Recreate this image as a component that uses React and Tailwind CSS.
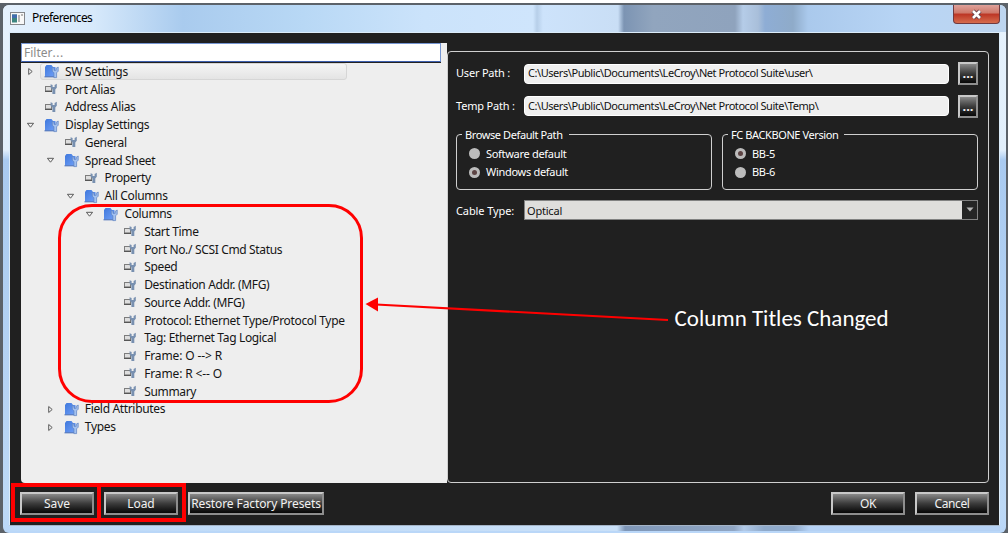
import clsx from "clsx";

// depth drives the indent of each row, open is only set on folders
const TREE = [
  { label: "SW Settings", depth: 0, folder: true, selected: true },
  { label: "Port Alias", depth: 0 },
  { label: "Address Alias", depth: 0 },
  { label: "Display Settings", depth: 0, folder: true, open: true },
  { label: "General", depth: 1 },
  { label: "Spread Sheet", depth: 1, folder: true, open: true },
  { label: "Property", depth: 2 },
  { label: "All Columns", depth: 2, folder: true, open: true },
  { label: "Columns", depth: 3, folder: true, open: true },
  { label: "Start Time", depth: 4 },
  { label: "Port No./ SCSI Cmd Status", depth: 4 },
  { label: "Speed", depth: 4 },
  { label: "Destination Addr. (MFG)", depth: 4 },
  { label: "Source Addr. (MFG)", depth: 4 },
  { label: "Protocol: Ethernet Type/Protocol Type", depth: 4 },
  { label: "Tag: Ethernet Tag Logical", depth: 4 },
  { label: "Frame: O --> R", depth: 4, wide: true },
  { label: "Frame: R <-- O", depth: 4, wide: true },
  { label: "Summary", depth: 4 },
  { label: "Field Attributes", depth: 1, folder: true },
  { label: "Types", depth: 1, folder: true },
];

const INDENT = 19.8;

const FolderIcon = () => (
  <svg width="16" height="15" viewBox="0 0 16 15" className="shrink-0">
    <defs>
      <linearGradient id="folder" x1="0" y1="0" x2="1" y2="1">
        <stop offset="0" stopColor="#3f78dc" />
        <stop offset="1" stopColor="#6f9ff7" />
      </linearGradient>
    </defs>
    <path d="M1 3 L2.5 1 H7.5 L9 3 H11.5 V12.5 H1 Z" fill="url(#folder)" />
    <path d="M0.5 12.8 H10" stroke="#3c65b4" strokeWidth="1" />
    <path
      d="M8.3 3.4 L10 4.2 V6.3 H12.2 V4.2 L14.2 3 V7.2 L12.6 8.8 V13.6 H9.9 V8.8 L8.3 7.2 Z"
      fill="#a3c1f0"
      stroke="#5a7fc0"
      strokeWidth="0.7"
    />
  </svg>
);

const ToolIcon = () => (
  <svg width="14" height="13" viewBox="0 0 14 13" className="shrink-0">
    <rect x="1.5" y="3.5" width="6" height="4.5" fill="#dedede" stroke="#7d7d7d" />
    <path d="M1 8.4 H8" stroke="#4c4c4c" strokeWidth="1" />
    <path
      d="M6.6 1.3 L8.6 2 V4 H10.6 V2 L12.8 0.8 V4.8 L11.3 6.4 V11 H8.4 V6.4 L6.6 4.6 Z"
      fill="#7890b0"
    />
  </svg>
);

const Arrow = ({ open }) => (
  <svg width="9" height="9" viewBox="0 0 9 9" className="shrink-0">
    <path
      d={open ? "M1.4 2.3 H7.6 L4.5 6.2 Z" : "M2.7 1.5 L6.2 4.5 L2.7 7.5 Z"}
      fill="#f2f2f2"
      stroke="#5c5c5c"
      strokeWidth="1"
    />
  </svg>
);

const TreeRow = ({ label, depth, folder, open, selected, wide }) => (
  <div className="flex h-[17.78px] items-center" style={{ paddingLeft: 5 + depth * INDENT }}>
    <div className="w-[14px] shrink-0">{folder && <Arrow open={open} />}</div>
    <div
      className={clsx(
        "flex h-[17px] items-center border",
        selected
          ? "w-[307px] rounded-[3px] border-[#d6d6d6] bg-linear-to-b from-[#f5f5f5] to-[#e4e4e4]"
          : "border-transparent"
      )}
    >
      <div className="flex w-[24px] shrink-0 items-center pl-[3px]">
        {folder ? <FolderIcon /> : <ToolIcon />}
      </div>
      <span
        className={clsx(
          "text-[12px] leading-[16px] whitespace-nowrap text-[#151515]",
          wide ? "tracking-[-0.13px]" : "tracking-[-0.34px]"
        )}
      >
        {label}
      </span>
    </div>
  </div>
);

const Button = ({ children, className }) => (
  <div
    className={clsx(
      "flex h-[23px] items-center justify-center whitespace-nowrap border-2 border-t-[#c8c8c8] border-r-[#8e8e8e] border-b-[#8e8e8e] border-l-[#c8c8c8] bg-linear-to-b from-[#8a8a8a] via-[#3c3c3c] to-[#080808] text-[#f2f2f2]",
      className
    )}
  >
    {children}
  </div>
);

const PathRow = ({ label, value }) => (
  <div className="flex h-[23px] items-center">
    <span className="w-[68px] shrink-0 tracking-[-0.2px]">{label}</span>
    <div className="flex h-[20px] w-[425px] items-center rounded-[4px] border border-white bg-[#efefef] pl-[3px] tracking-[-0.44px] whitespace-nowrap text-[#111]">
      {value}
    </div>
    <Button className="ml-[9px] w-[20px] pt-[1px] text-[13px] font-bold">...</Button>
  </div>
);

const Radio = ({ label, checked }) => (
  <div className="flex h-[18.5px] items-center gap-[6px]">
    <span className="flex size-[11px] items-center justify-center rounded-full bg-[#bcbcbc]">
      {checked && <span className="size-[5px] rounded-full bg-[#5d4444]" />}
    </span>
    <span className="tracking-[-0.3px] whitespace-nowrap">{label}</span>
  </div>
);

const Group = ({ title, options, selected }) => (
  <fieldset className="h-[63px] w-[256px] rounded-[4px] border border-[#cfcfcf] pl-[12px]">
    <legend className="-ml-[7px] h-[16px] pr-[6px] pl-[3px] leading-[15px] tracking-[-0.4px] whitespace-nowrap">
      {title}
    </legend>
    <div className="pt-[2px]">
      {options.map((o) => (
        <Radio key={o} label={o} checked={o === selected} />
      ))}
    </div>
  </fieldset>
);

const TitleBar = () => (
  <div className="flex h-[27px] items-start justify-between rounded-t-[6px] bg-[linear-gradient(90deg,#e5f1fd_0px,#d7e9fb_90px,#a9cbee_180px,#b8d8f5_300px,#cbe3fb_420px,#cfe5fc_530px,#b7cfe9_534px,#cde3fb_540px,#c9def5_615px,#7c94b3_621px,#91a5be_650px,#8fa3bd_732px,#b5cce8_740px,#a9bfda_755px,#8eadd5_762px,#8fabc9_790px,#aac9ec_805px,#b8d5f5_900px,#bdd5ef_1002px)]">
    <div className="flex items-center gap-[7px] pt-[4px] pl-[7px]">
      <svg width="15" height="13" viewBox="0 0 15 13">
        <rect x="0.5" y="0.5" width="14" height="12" fill="#f8f8f8" stroke="#85878b" />
        <rect x="2" y="2.5" width="5" height="8" fill="#3c8580" />
        <path d="M2 2.5 H7 V6 H2Z" fill="#416cae" />
        <path d="M9 3 V10 M12 2 V4" stroke="#9b9b9b" strokeWidth="1.4" />
      </svg>
      <span className="text-[12px] leading-[18px] tracking-[-0.6px] text-black">Preferences</span>
    </div>
    <div className="mr-[6px] flex h-[19px] w-[47px] items-center justify-center rounded-b-[4px] border border-t-0 border-[#713a3f] bg-[linear-gradient(#dfa19a_0%,#ce7869_45%,#bc3524_50%,#d66d4e_100%)]">
      <svg width="13" height="11" viewBox="0 0 13 11">
        <path d="M3 2 L10 9 M10 2 L3 9" stroke="#62404a" strokeWidth="4.4" />
        <path d="M3 2 L10 9 M10 2 L3 9" stroke="#fff" strokeWidth="2.6" />
      </svg>
    </div>
  </div>
);

const Sidebar = () => (
  <div className="flex h-[440px] w-[426px] shrink-0 rounded-bl-[4px] bg-[#eee]">
    <div className="w-[420px]">
      <div className="flex h-[19px] items-center border border-[#7696d2] border-b-[#3d5fae] bg-white pl-[2px] text-[12px] text-[#8b8b8b]">
        Filter<span className="tracking-[0.6px]">...</span>
      </div>
      <div className="border-t border-[#222]">
        {TREE.map((row) => (
          <TreeRow key={row.label} {...row} />
        ))}
      </div>
    </div>
  </div>
);

const Settings = () => (
  <div className="mt-[8px] h-[432px] w-[542px] rounded-[4px] border border-[#cfcfcf] pt-[10px] pl-[8px] text-[11px]">
    <div className="flex flex-col gap-[9.5px]">
      <PathRow label="User Path :" value="C:\Users\Public\Documents\LeCroy\Net Protocol Suite\user\" />
      <PathRow label="Temp Path :" value="C:\Users\Public\Documents\LeCroy\Net Protocol Suite\Temp\" />
    </div>
    <div className="mt-[9px] flex gap-[10px]">
      <Group
        title="Browse Default Path"
        options={["Software default", "Windows default"]}
        selected="Windows default"
      />
      <Group title="FC BACKBONE Version" options={["BB-5", "BB-6"]} selected="BB-5" />
    </div>
    <div className="mt-[10px] flex h-[20px] items-center">
      <span className="w-[68px] shrink-0 pt-[3px] tracking-[-0.1px]">Cable Type:</span>
      <div className="flex h-[20px] w-[454px] border border-[#828282] bg-[#dfdedc] text-[#111]">
        <span className="flex-1 pl-[2px] leading-[19px] tracking-[-0.2px]">Optical</span>
        <div className="flex w-[15px] items-center justify-center bg-[#252525]">
          <svg width="8" height="5" viewBox="0 0 8 5">
            <path d="M0.5 0.5 H7.5 L4 4.5 Z" fill="#b5b5b5" />
          </svg>
        </div>
      </div>
    </div>
  </div>
);

const Annotations = () => (
  <>
    <div className="absolute top-[204px] left-[58px] h-[199px] w-[305px] rounded-[34px] border-3 border-[#f00]" />
    <div className="absolute top-[483px] left-[11px] h-[39px] w-[90px] border-4 border-[#f00]" />
    <div className="absolute top-[483px] left-[97px] h-[39px] w-[89px] border-4 border-[#f00]" />
    <svg className="absolute top-[290px] left-[360px]" width="320" height="40" viewBox="360 290 320 40">
      <path d="M376 304.5 L668 320" stroke="#f00" strokeWidth="2.2" />
      <path d="M365.5 304 L378 297.5 V311.5 Z" fill="#f00" />
    </svg>
    <div className="absolute top-[304px] left-[674.5px] font-[Carlito,Lato,sans-serif] text-[23px] leading-[28px] whitespace-nowrap text-white">
      Column Titles Changed
    </div>
  </>
);

const App = () => (
  <div className="relative h-[533px] w-[1008px] overflow-hidden bg-white pt-[3px] font-['Noto_Sans',sans-serif] text-white">
    <div className="h-[530px] bg-[#5c6269] px-[3px] pt-[2px]">
      <div className="h-[528px] w-[1003px] rounded-[6px] bg-[linear-gradient(#e6f2fd_0px,#e2effb_145px,#a9caf0_155px,#bdd9f6_500px,#bad7f8_527px)]">
        <TitleBar />
        <div className="mx-[6px] h-[494px] border border-[#dcecf9] border-b-[#a4b4c7] bg-[#202020] pt-[10px] pl-[11px]">
          <div className="flex">
            <Sidebar />
            <Settings />
          </div>
          <div className="mt-[9px] -ml-px flex text-[12px]">
            <Button className="w-[74px] tracking-[-0.1px]">Save</Button>
            <Button className="ml-[10px] w-[74px] tracking-[-0.1px]">Load</Button>
            <Button className="ml-[10px] w-[136px] tracking-[-0.1px]">Restore Factory Presets</Button>
            <Button className="ml-[507px] w-[74px] tracking-[-0.3px]">OK</Button>
            <Button className="ml-[10px] w-[74px] tracking-[-0.4px]">Cancel</Button>
          </div>
        </div>
        <div className="mx-[6px] h-[5px] bg-[linear-gradient(90deg,#bcd9f8_0px,#c9e0f8_608px,#7f97b8_616px,#90a6c4_725px,#b2cae8_735px,#8faacb_755px,#8faacb_785px,#b5d2f5_800px,#b5d2f5_990px)]" />
      </div>
    </div>
    <Annotations />
  </div>
);

export default App;
